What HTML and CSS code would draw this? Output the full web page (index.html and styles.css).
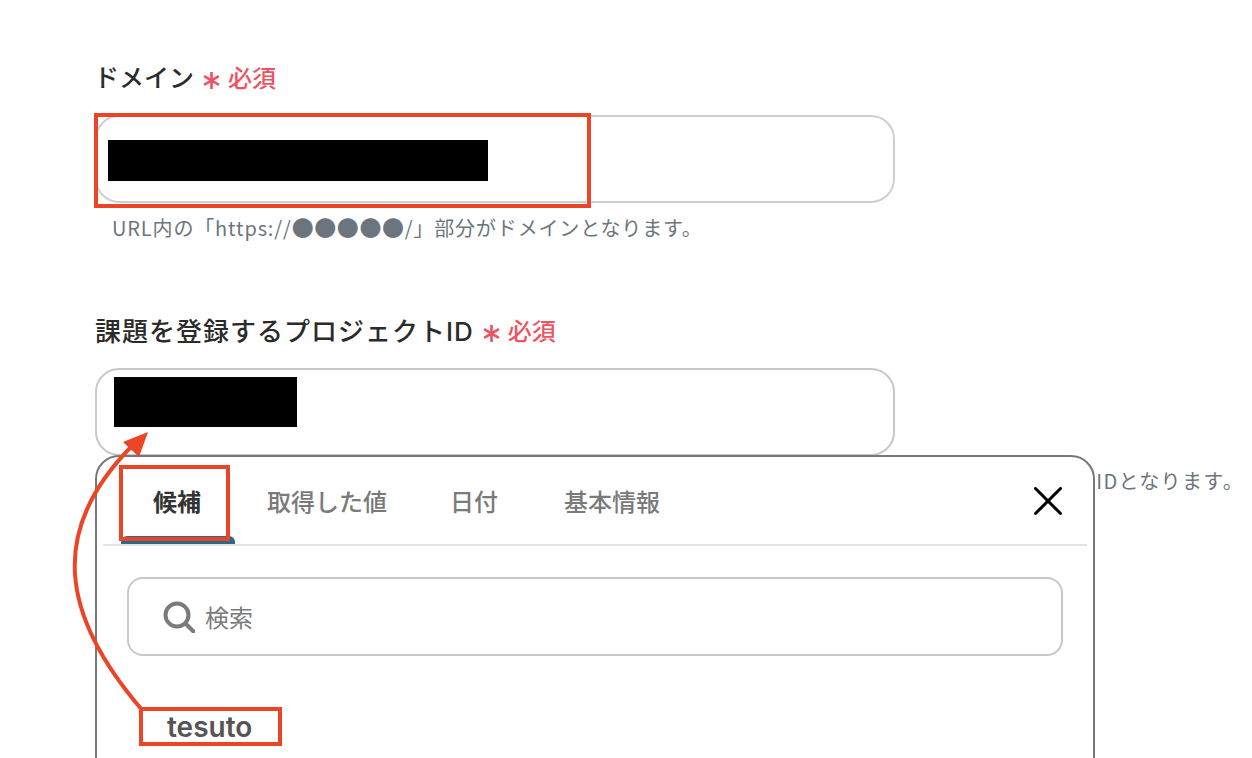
FILE: index.html
```html
<!DOCTYPE html>
<html lang="ja">
<head>
  <meta charset="UTF-8">
  <meta name="viewport" content="width=device-width, initial-scale=1.0">
  <title>Project settings</title>
  <link rel="stylesheet" href="styles.css">
</head>
<body>
  <div class="page">
    <form class="form">
      <div class="field">
        <div class="label label-first">ドメイン
          <svg class="star" viewBox="0 0 16 18"><path d="M8 1v16M1 4.8l14 8.4M15 4.8L1 13.2"/></svg>
          <span class="req">必須</span>
        </div>
        <div class="input"><span class="redact redact-domain"></span></div>
        <p class="hint">URL内の「https://<span class="dots">●●●●●</span>/」部分がドメインとなります。</p>
      </div>

      <div class="field field-second">
        <div class="label">課題を登録するプロジェクトID
          <svg class="star" viewBox="0 0 16 18"><path d="M8 1v16M1 4.8l14 8.4M15 4.8L1 13.2"/></svg>
          <span class="req">必須</span>
        </div>
        <div class="input input-project"><span class="redact redact-project"></span></div>
        <p class="hint hint-tail">IDとなります。</p>

        <div class="panel">
          <div class="tabs">
            <span class="tab active">候補</span>
            <span class="tab tab-got">取得した値</span>
            <span class="tab tab-date">日付</span>
            <span class="tab tab-info">基本情報</span>
            <svg class="close" viewBox="0 0 28 28"><path d="M1.5 1.5l25 25M26.500 1.500l-25 25"/></svg>
          </div>
          <div class="search">
            <svg class="search-icon" viewBox="0 0 32 32"><circle cx="14" cy="14" r="11.500"/><path d="M22.500 22.500l8 8"/></svg>
            <span class="search-text">検索</span>
          </div>
          <div class="option">tesuto</div>
        </div>
      </div>
    </form>

    <!-- annotations drawn over the screenshot -->
    <div class="mark mark-domain"></div>
    <div class="mark mark-tab"></div>
    <div class="mark mark-option"></div>
    <svg class="arrow" viewBox="0 0 1252 758">
      <path class="arrow-line" d="M143 711C60 615 48 530 133 445"/>
      <path class="arrow-head" d="M148 432L123 442L139 457Z"/>
    </svg>
  </div>
</body>
</html>
```

FILE: styles.css
```css
html, body {
  margin: 0;
  padding: 0;
  background-color: #fff;
}

body {
  font-family: Inter, "Noto Sans CJK JP", sans-serif;
}

.page {
  position: relative;
  width: 1252px;
  height: 758px;
  overflow: hidden;
}

.form {
  width: 800px;
  padding: 58px 0 0 95px;
}

.field {
  position: relative;
}

.field-second {
  margin-top: 68px;
}

.label {
  display: flex;
  align-items: center;
  height: 36px;
  font-size: 26px;
  font-weight: 500;
  letter-spacing: 1px;
  color: #2b2b2b;
  white-space: nowrap;
}

.label-first {
  margin-left: -1px;
  font-size: 25px;
  letter-spacing: 0;
}

.star {
  flex: none;
  width: 17px;
  height: 19px;
  margin: 8px 0 0 9px;
  fill: none;
  stroke: #ef5261;
  stroke-width: 2.500;
}

.req {
  margin-left: 8px;
  font-size: 24px;
  font-weight: 500;
  letter-spacing: 0;
  color: #ef5261;
}

.input {
  display: flex;
  align-items: center;
  box-sizing: border-box;
  height: 88px;
  margin-top: 21px;
  padding: 2px 0 0 11px;
  border: 2px solid #ccd0d4;
  border-radius: 24px;
  background-color: #fff;
}

.input-project {
  align-items: flex-start;
  padding: 7px 0 0 17px;
  border-color: #c8c8c8;
}

.redact {
  display: block;
  background-color: #000;
}

.redact-domain {
  width: 380px;
  height: 41px;
}

.redact-project {
  width: 183px;
  height: 50px;
}

.hint {
  margin: 10px 0 0 17px;
  font-family: "Noto Sans CJK JP", sans-serif;
  font-size: 20px;
  line-height: 30px;
  letter-spacing: 0.85px;
  color: #6c757d;
  white-space: nowrap;
}

.dots {
  font-size: 22px;
  line-height: 20px;
  letter-spacing: 0.6px;
}

.hint-tail {
  width: 1132px;
  letter-spacing: 1.35px;
  text-align: right;
}

/* popup over the project field */
.panel {
  position: absolute;
  top: 144px;
  left: 0;
  box-sizing: border-box;
  width: 1000px;
  height: 420px;
  padding: 0 6px;
  border: 2px solid #777;
  border-radius: 24px;
  background-color: #fff;
}

.tabs {
  display: flex;
  align-items: center;
  height: 87px;
  border-bottom: 2px solid #e3e3e3;
  position: relative;
}

.tab {
  font-size: 24px;
  font-weight: 500;
  color: #7a7a7a;
  white-space: nowrap;
}

.tab.active {
  margin-left: 50px;
  font-weight: 700;
  color: #333;
}

.tab.active::after {
  content: "";
  position: absolute;
  left: 18px;
  bottom: 0;
  width: 114px;
  height: 8px;
  border-radius: 6px 6px 0 0;
  background-color: #2a6a8c;
}

.tab-got {
  margin-left: 66px;
}

.tab-date {
  margin-left: 63px;
}

.tab-info {
  margin-left: 66px;
}

.close {
  width: 28px;
  height: 28px;
  margin-left: auto;
  margin-right: 25px;
  fill: none;
  stroke: #000;
  stroke-width: 3;
  stroke-linecap: round;
}

.search {
  display: flex;
  align-items: center;
  box-sizing: border-box;
  height: 79px;
  margin: 31px 24px 0;
  padding-left: 34px;
  border: 2px solid #c8c8c8;
  border-radius: 16px;
}

.search-icon {
  width: 32px;
  height: 32px;
  fill: none;
  stroke: #7a7a7a;
  stroke-width: 4;
  stroke-linecap: round;
}

.search-text {
  margin-left: 10px;
  font-size: 24px;
  color: #7a7a7a;
}

.option {
  margin: 53px 0 0 64px;
  font-size: 28px;
  font-weight: 600;
  line-height: 36px;
  color: #555;
}

.mark {
  position: absolute;
  box-sizing: border-box;
  border: 4px solid #ec4427;
}

.mark-domain {
  top: 113px;
  left: 94px;
  width: 497px;
  height: 95px;
}

.mark-tab {
  top: 465px;
  left: 119px;
  width: 111px;
  height: 76px;
}

.mark-option {
  top: 707px;
  left: 139px;
  width: 143px;
  height: 39px;
}

.arrow {
  position: absolute;
  top: 0;
  left: 0;
  width: 1252px;
  height: 758px;
}

.arrow-line {
  fill: none;
  stroke: #ec4427;
  stroke-width: 4;
}

.arrow-head {
  fill: #ec4427;
}
```
